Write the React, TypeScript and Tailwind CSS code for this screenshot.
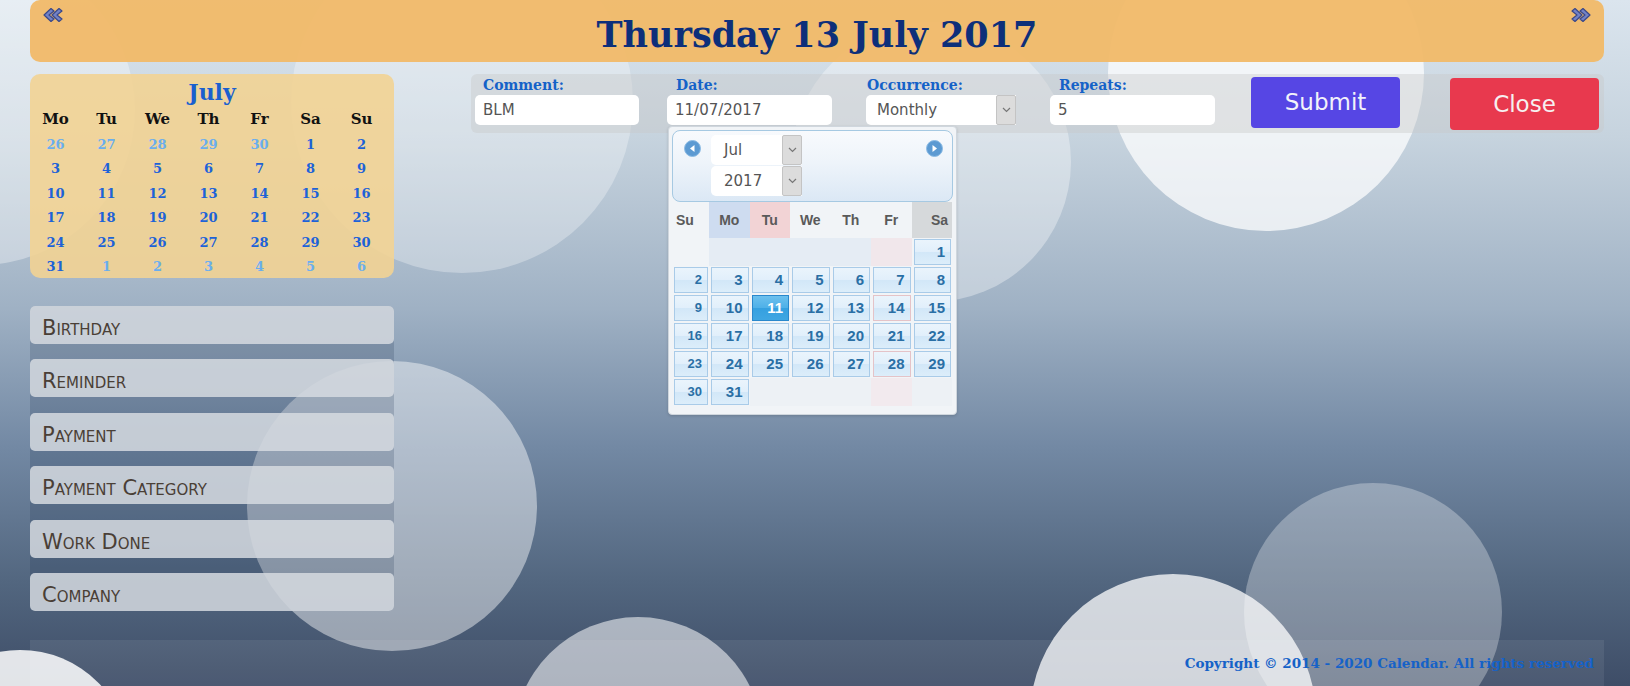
import React from 'react';

// July 2017, Monday-first for the small calendar
const MINI_WEEKS: { d: number; out?: boolean }[][] = [
  [{ d: 26, out: true }, { d: 27, out: true }, { d: 28, out: true }, { d: 29, out: true }, { d: 30, out: true }, { d: 1 }, { d: 2 }],
  [3, 4, 5, 6, 7, 8, 9].map((d) => ({ d })),
  [10, 11, 12, 13, 14, 15, 16].map((d) => ({ d })),
  [17, 18, 19, 20, 21, 22, 23].map((d) => ({ d })),
  [24, 25, 26, 27, 28, 29, 30].map((d) => ({ d })),
  [{ d: 31 }, { d: 1, out: true }, { d: 2, out: true }, { d: 3, out: true }, { d: 4, out: true }, { d: 5, out: true }, { d: 6, out: true }],
];

// Sunday-first for the date picker popup
const PICKER_WEEKS: (number | null)[][] = [
  [null, null, null, null, null, null, 1],
  [2, 3, 4, 5, 6, 7, 8],
  [9, 10, 11, 12, 13, 14, 15],
  [16, 17, 18, 19, 20, 21, 22],
  [23, 24, 25, 26, 27, 28, 29],
  [30, 31, null, null, null, null, null],
];

const MENU = ['Birthday', 'Reminder', 'Payment', 'Payment Category', 'Work Done', 'Company'];

function Bokeh() {
  const circles = [
    { cx: -20, cy: 110, r: 155, o: 0.35 },
    { cx: 462, cy: 102, r: 171, o: 0.3 },
    { cx: 931, cy: 162, r: 140, o: 0.35 },
    { cx: 1266, cy: 73, r: 158, o: 0.72 },
    { cx: 392, cy: 506, r: 145, o: 0.45 },
    { cx: 1373, cy: 612, r: 129, o: 0.3 },
    { cx: 1173, cy: 717, r: 143, o: 0.75 },
    { cx: 638, cy: 742, r: 125, o: 0.55 },
    { cx: 20, cy: 760, r: 110, o: 0.85 },
  ];
  return (
    <svg className="absolute inset-0 pointer-events-none" width="1630" height="686" viewBox="0 0 1630 686">
      {circles.map((c, i) => (
        <circle key={i} cx={c.cx} cy={c.cy} r={c.r} fill="#ffffff" fillOpacity={c.o} />
      ))}
    </svg>
  );
}

function DoubleArrow({ dir }: { dir: 'left' | 'right' }) {
  return (
    <svg width="21" height="16" viewBox="0 0 21 16" className={dir === 'right' ? 'scale-x-[-1]' : ''}>
      <path
        d="M9 1.5 L2 8 L9 14.5 L12 12 L7 8 L12 4 Z M17 1.5 L10 8 L17 14.5 L20 12 L15 8 L20 4 Z"
        fill="#7282c6"
        stroke="#3a4888"
        strokeWidth="1.2"
        strokeLinejoin="round"
      />
    </svg>
  );
}

function Header() {
  return (
    <header className="h-[62px] rounded-[10px] bg-[#f1b968]/95 flex items-start justify-between px-[12px]">
      <button className="mt-[7px]">
        <DoubleArrow dir="left" />
      </button>
      <h1 className="self-center pt-[8px] font-['DejaVu_Serif',serif] font-bold text-[35px] leading-[40px] text-[#0d2f7a]">
        Thursday 13 July 2017
      </h1>
      <button className="mt-[7px]">
        <DoubleArrow dir="right" />
      </button>
    </header>
  );
}

function MiniCalendar() {
  return (
    <div className="h-[204px] overflow-hidden rounded-[10px] bg-[#f2d393]/90 pt-[4px] font-['DejaVu_Serif',serif] font-bold">
      <div className="h-[28px] text-center text-[22px] leading-[28px] text-[#1a5fcf]">July</div>
      <div className="grid grid-cols-[repeat(7,51px)]">
        {['Mo', 'Tu', 'We', 'Th', 'Fr', 'Sa', 'Su'].map((w) => (
          <div key={w} className="h-[26px] flex items-center justify-center text-[15px] text-[#111]">
            {w}
          </div>
        ))}
        {MINI_WEEKS.flat().map((c, i) => (
          <div
            key={i}
            className={`h-[24.5px] flex items-center justify-center text-[13px] ${
              c.out ? 'text-[#6aaeee]' : 'text-[#1d62d8]'
            }`}
          >
            {c.d}
          </div>
        ))}
      </div>
    </div>
  );
}

function SideMenu() {
  return (
    <nav className="mt-[28px] flex flex-col gap-[15.4px] rounded-[5px] bg-[#1e3050]/20">
      {MENU.map((m) => (
        <a
          key={m}
          className="h-[38px] rounded-[5px] bg-[#d6dbe0]/85 pl-[12px] pt-[10px] font-['DejaVu_Sans',sans-serif] text-[21px] leading-[24px] [font-variant:small-caps] text-[#4a3f36]"
        >
          {m}
        </a>
      ))}
    </nav>
  );
}

function Chevron() {
  return (
    <svg width="9" height="6" viewBox="0 0 9 6">
      <path d="M1 1 L4.5 4.5 L8 1" fill="none" stroke="#777" strokeWidth="1.2" />
    </svg>
  );
}

function SelectBox({ value, w, textPad }: { value: string; w: string; textPad: string }) {
  return (
    <div className={`${w} h-[30px] flex rounded-l-[5px] bg-white`}>
      <div className={`flex-1 flex items-center ${textPad} font-['DejaVu_Sans',sans-serif] text-[15px] text-[#555]`}>
        {value}
      </div>
      <div className="w-[20px] flex items-center justify-center bg-[#dcdcdc] border border-[#c4c4c4] rounded-[2px]">
        <Chevron />
      </div>
    </div>
  );
}

function PickerNav({ dir }: { dir: 'prev' | 'next' }) {
  return (
    <svg width="17" height="17" viewBox="0 0 17 17">
      <circle cx="8.5" cy="8.5" r="8" fill="#5c9ad2" stroke="#8cbbe4" strokeWidth="1" />
      {dir === 'prev' ? <path d="M10.5 5 L6 8.5 L10.5 12 Z" fill="#fff" /> : <path d="M6.5 5 L11 8.5 L6.5 12 Z" fill="#fff" />}
    </svg>
  );
}

function DatePicker() {
  const headBg = ['bg-transparent', 'bg-[#cedcf0]', 'bg-[#f2d3d5]', 'bg-transparent', 'bg-transparent', 'bg-transparent', 'bg-[#d6d9db]'];
  const headAlign = ['justify-start pl-[4px]', 'justify-center', 'justify-center', 'justify-center', 'justify-center', 'justify-center', 'justify-end pr-[4px]'];
  return (
    <div className="absolute left-[1px] top-[51px] z-10 w-[289px] rounded-[4px] border border-[#cfd6dd] bg-[#f1f4f7] p-[3px] pb-[8px] shadow-[0_1px_3px_rgba(0,0,0,0.15)]">
      <div className="relative h-[72px] rounded-[8px] border border-[#a6c9e2] bg-[linear-gradient(180deg,#f8fafd_0%,#eef4fa_45%,#dbe8f5_100%)]">
        <div className="absolute left-[11px] top-[9px]">
          <PickerNav dir="prev" />
        </div>
        <div className="absolute right-[9px] top-[9px]">
          <PickerNav dir="next" />
        </div>
        <div className="absolute left-[38px] top-[4px] flex flex-col gap-[1px]">
          <SelectBox value="Jul" w="w-[91px]" textPad="pl-[13px]" />
          <SelectBox value="2017" w="w-[91px]" textPad="pl-[13px]" />
        </div>
      </div>
      <div className="grid grid-cols-[37px_repeat(6,40.5px)] font-['Liberation_Sans',sans-serif]">
        {['Su', 'Mo', 'Tu', 'We', 'Th', 'Fr', 'Sa'].map((w, i) => (
          <div key={w} className={`h-[36px] flex items-center ${headAlign[i]} ${headBg[i]} text-[14px] font-bold text-[#5a5a5a]`}>
            {w}
          </div>
        ))}
        {PICKER_WEEKS.map((week, r) =>
          week.map((d, c) => {
            if (d === null) {
              const bg =
                r === 0
                  ? c === 0
                    ? 'bg-transparent'
                    : c === 5
                      ? 'bg-[#f1e7eb]'
                      : 'bg-[#e5ecf4]'
                  : c === 5
                    ? 'bg-[#f2eaee]'
                    : 'bg-[#edf1f5]';
              return <div key={`${r}-${c}`} className={`h-[28px] ${bg}`} />;
            }
            const selected = d === 11;
            const pink = d === 14 || d === 28;
            return (
              <div key={`${r}-${c}`} className="h-[28px] p-[1px] pl-[2px]">
                <div
                  className={`h-[26px] flex items-center justify-end pr-[5px] border font-bold ${
                    c === 0 ? 'text-[13px]' : 'text-[15px]'
                  } ${
                    selected
                      ? 'border-[#2a88cc] bg-[linear-gradient(180deg,#6cc0ee_0%,#4eb0e8_50%,#35a0e0_51%,#3fa6e2_100%)] text-white'
                      : `${pink ? 'border-[#e4c3c8]' : 'border-[#a9cbe8]'} bg-[linear-gradient(180deg,#eaf4fc_0%,#e1effb_50%,#d2e7f8_51%,#dcedfa_100%)] text-[#2a6fa5]`
                  }`}
                >
                  {d}
                </div>
              </div>
            );
          }),
        )}
      </div>
    </div>
  );
}

function TextBox({ value, w }: { value: string; w: string }) {
  return (
    <div className={`${w} h-[30px] rounded-[5px] bg-white flex items-center pl-[8px] font-['DejaVu_Sans',sans-serif] text-[15px] text-[#555]`}>
      {value}
    </div>
  );
}

function Label({ text, pad }: { text: string; pad: string }) {
  return (
    <label className={`block h-[20px] ${pad} font-['DejaVu_Serif',serif] font-bold text-[14px] leading-[20px] text-[#1562c8]`}>
      {text}
    </label>
  );
}

function EventForm() {
  return (
    <div className="ml-[77px] flex-1 self-start h-[59px] rounded-[6px] bg-[#c8c8c8]/40 flex items-start pl-[4px] pt-[1px]">
      <div className="w-[192px]">
        <Label text="Comment:" pad="pl-[8px]" />
        <TextBox value="BLM" w="w-[164px]" />
      </div>
      <div className="relative w-[199px]">
        <Label text="Date:" pad="pl-[9px]" />
        <TextBox value="11/07/2017" w="w-[165px]" />
        <DatePicker />
      </div>
      <div className="w-[184px]">
        <Label text="Occurrence:" pad="pl-[1px]" />
        <SelectBox value="Monthly" w="w-[150px]" textPad="pl-[11px]" />
      </div>
      <div className="w-[165px]">
        <Label text="Repeats:" pad="pl-[9px]" />
        <TextBox value="5" w="w-[165px]" />
      </div>
      <button className="ml-[36px] mt-[2px] w-[149px] h-[51px] rounded-[4px] bg-[#5646e4] font-['DejaVu_Sans',sans-serif] text-[23px] text-[#f2f2fa]">
        Submit
      </button>
      <button className="ml-[50px] mt-[3px] w-[149px] h-[52px] rounded-[4px] bg-[#e8394e] font-['DejaVu_Sans',sans-serif] text-[23px] text-[#f6f0f0]">
        Close
      </button>
    </div>
  );
}

export default function App() {
  return (
    <div className="relative w-full h-[686px] overflow-hidden bg-[linear-gradient(180deg,#dbe5ee_0%,#c6d3de_20%,#9fb1c4_45%,#7389a4_65%,#52667f_85%,#3e4d67_100%)]">
      <Bokeh />
      <div className="relative ml-[30px] w-[1574px] flex flex-col">
        <Header />
        <div className="mt-[12px] flex">
          <aside className="w-[364px] flex flex-col">
            <MiniCalendar />
            <SideMenu />
          </aside>
          <EventForm />
        </div>
        <footer className="mt-[29px] h-[46px] bg-white/[0.07] flex items-center justify-end pr-[10px] font-['DejaVu_Serif',serif] font-bold text-[13.5px] text-[#1562c8]">
          Copyright © 2014 - 2020 Calendar. All rights reserved
        </footer>
      </div>
    </div>
  );
}
